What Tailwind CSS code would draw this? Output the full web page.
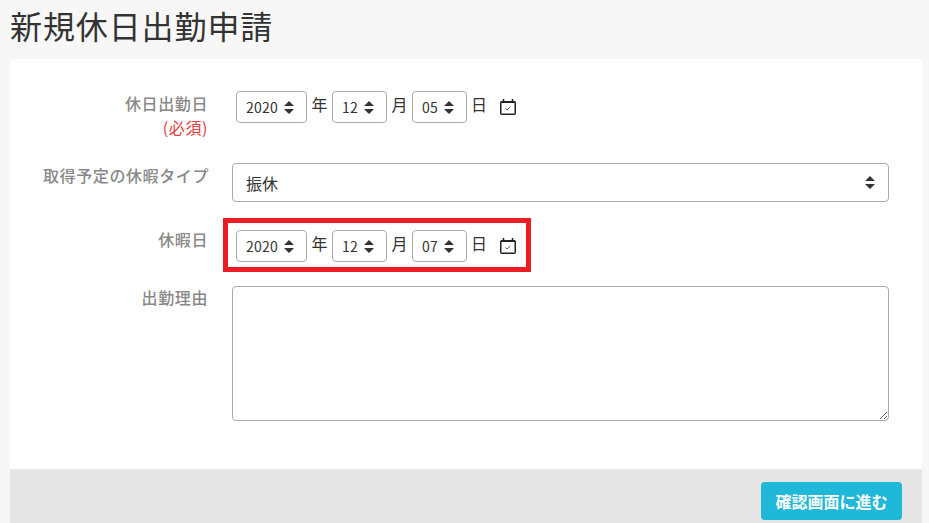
<!DOCTYPE html>
<html lang="ja">

<head>
    <meta charset="UTF-8" />
    <title>新規休日出勤申請</title>
    <script src="https://cdn.jsdelivr.net/npm/@tailwindcss/browser@4"></script>
</head>

<body class="bg-[#f7f7f7] h-[523px] overflow-hidden font-['Noto_Sans_CJK_JP',sans-serif] text-[#333]">
    <h1 class="h-[59px] pl-[10px] pt-[1px] text-[32px] tracking-[0.9px] leading-[48px] font-normal">新規休日出勤申請</h1>

    <div class="relative ml-[10px] w-[912px] bg-white rounded-t-[4px]">
        <form class="pt-[32px] pr-[33px]">
            <!-- 休日出勤日 -->
            <div class="flex h-[72px]">
                <div class="w-[198px] text-right text-[#888] text-[16px] font-medium tracking-[0.6px] leading-[24px]">
                    <div>休日出勤日</div>
                    <div class="text-[#e53e3e] font-normal">(必須)</div>
                </div>
                <div class="ml-[28px] flex items-start">
                    <div class="relative w-[71px]">
                        <select class="appearance-none w-full h-[32px] pl-[9px] border border-[#aaa] rounded-[4px] bg-white text-[14px] tracking-[0.2px]"><option>2020</option></select>
                        <svg class="absolute left-[47px] top-[10px]" width="12" height="13" viewBox="0 0 12 13"><path d="M1 5 6 0l5 5zM1 8h10l-5 5z" fill="#333" /></svg>
                    </div>
                    <span class="w-[25px] text-center text-[16px] leading-[26px]">年</span>
                    <div class="relative w-[55px]">
                        <select class="appearance-none w-full h-[32px] pl-[9px] border border-[#aaa] rounded-[4px] bg-white text-[14px] tracking-[0.2px]"><option>12</option></select>
                        <svg class="absolute left-[31px] top-[10px]" width="12" height="13" viewBox="0 0 12 13"><path d="M1 5 6 0l5 5zM1 8h10l-5 5z" fill="#333" /></svg>
                    </div>
                    <span class="w-[25px] text-center text-[16px] leading-[26px]">月</span>
                    <div class="relative w-[55px]">
                        <select class="appearance-none w-full h-[32px] pl-[9px] border border-[#aaa] rounded-[4px] bg-white text-[14px] tracking-[0.2px]"><option>05</option></select>
                        <svg class="absolute left-[31px] top-[10px]" width="12" height="13" viewBox="0 0 12 13"><path d="M1 5 6 0l5 5zM1 8h10l-5 5z" fill="#333" /></svg>
                    </div>
                    <span class="w-[24px] text-center text-[16px] leading-[26px]">日</span>
                    <svg class="ml-[9px] mt-[8px]" width="16" height="16" viewBox="0 0 16 16" fill="none"><rect x="0.75" y="2.75" width="14.5" height="12.5" rx="1" stroke="#222" stroke-width="1.5" /><path d="M1 2h14v2H1z" fill="#222" /><path d="M3.5 0v2M12.5 0v2" stroke="#222" stroke-width="1.5" /><path d="M5.5 9.5l1.5 1.5 3.2-3" stroke="#555" /></svg>
                </div>
            </div>

            <!-- 取得予定の休暇タイプ -->
            <div class="flex h-[67px]">
                <div class="w-[199px] text-right text-[#888] text-[16px] font-medium tracking-[0.6px] leading-[24px] whitespace-nowrap">取得予定の休暇タイプ</div>
                <div class="ml-[23px] relative w-[657px] h-[39px]">
                    <select class="appearance-none w-full h-[39px] pl-[13px] border border-[#aaa] rounded-[4px] bg-white text-[16px]"><option>振休</option></select>
                    <svg class="absolute right-[13px] top-[13px]" width="12" height="13" viewBox="0 0 12 13"><path d="M1 5 6 0l5 5zM1 8h10l-5 5z" fill="#333" /></svg>
                </div>
            </div>

            <!-- 休暇日 -->
            <div class="flex h-[56px]">
                <div class="w-[198px] text-right text-[#888] text-[16px] font-medium tracking-[0.6px] leading-[18px]">休暇日</div>
                <div class="ml-[28px] flex items-start">
                    <div class="relative w-[71px]">
                        <select class="appearance-none w-full h-[32px] pl-[9px] border border-[#aaa] rounded-[4px] bg-white text-[14px] tracking-[0.2px]"><option>2020</option></select>
                        <svg class="absolute left-[47px] top-[10px]" width="12" height="13" viewBox="0 0 12 13"><path d="M1 5 6 0l5 5zM1 8h10l-5 5z" fill="#333" /></svg>
                    </div>
                    <span class="w-[25px] text-center text-[16px] leading-[26px]">年</span>
                    <div class="relative w-[55px]">
                        <select class="appearance-none w-full h-[32px] pl-[9px] border border-[#aaa] rounded-[4px] bg-white text-[14px] tracking-[0.2px]"><option>12</option></select>
                        <svg class="absolute left-[31px] top-[10px]" width="12" height="13" viewBox="0 0 12 13"><path d="M1 5 6 0l5 5zM1 8h10l-5 5z" fill="#333" /></svg>
                    </div>
                    <span class="w-[25px] text-center text-[16px] leading-[26px]">月</span>
                    <div class="relative w-[55px]">
                        <select class="appearance-none w-full h-[32px] pl-[9px] border border-[#aaa] rounded-[4px] bg-white text-[14px] tracking-[0.2px]"><option>07</option></select>
                        <svg class="absolute left-[31px] top-[10px]" width="12" height="13" viewBox="0 0 12 13"><path d="M1 5 6 0l5 5zM1 8h10l-5 5z" fill="#333" /></svg>
                    </div>
                    <span class="w-[24px] text-center text-[16px] leading-[26px]">日</span>
                    <svg class="ml-[9px] mt-[8px]" width="16" height="16" viewBox="0 0 16 16" fill="none"><rect x="0.75" y="2.75" width="14.5" height="12.5" rx="1" stroke="#222" stroke-width="1.5" /><path d="M1 2h14v2H1z" fill="#222" /><path d="M3.5 0v2M12.5 0v2" stroke="#222" stroke-width="1.5" /><path d="M5.5 9.5l1.5 1.5 3.2-3" stroke="#555" /></svg>
                </div>
            </div>

            <!-- 出勤理由 -->
            <div class="flex h-[183px]">
                <div class="w-[198px] text-right text-[#888] text-[16px] font-medium tracking-[0.6px] leading-[22px]">出勤理由</div>
                <div class="ml-[24px] w-[657px]">
                    <textarea class="block w-full h-[135px] border border-[#aaa] rounded-[4px] bg-white"></textarea>
                </div>
            </div>
        </form>

        <!-- 赤枠の注釈 -->
        <div class="absolute left-[213px] top-[159px] w-[308px] h-[54px] border-[5px] border-[#ed1c24]"></div>

        <div class="bg-[#e5e5e5] h-[54px] pt-[13px] pr-[20px] flex justify-end">
            <button type="button" class="w-[141px] h-[38px] bg-[#1fb8d9] text-white text-[16px] font-bold rounded-[4px]">確認画面に進む</button>
        </div>
    </div>
</body>

</html>
